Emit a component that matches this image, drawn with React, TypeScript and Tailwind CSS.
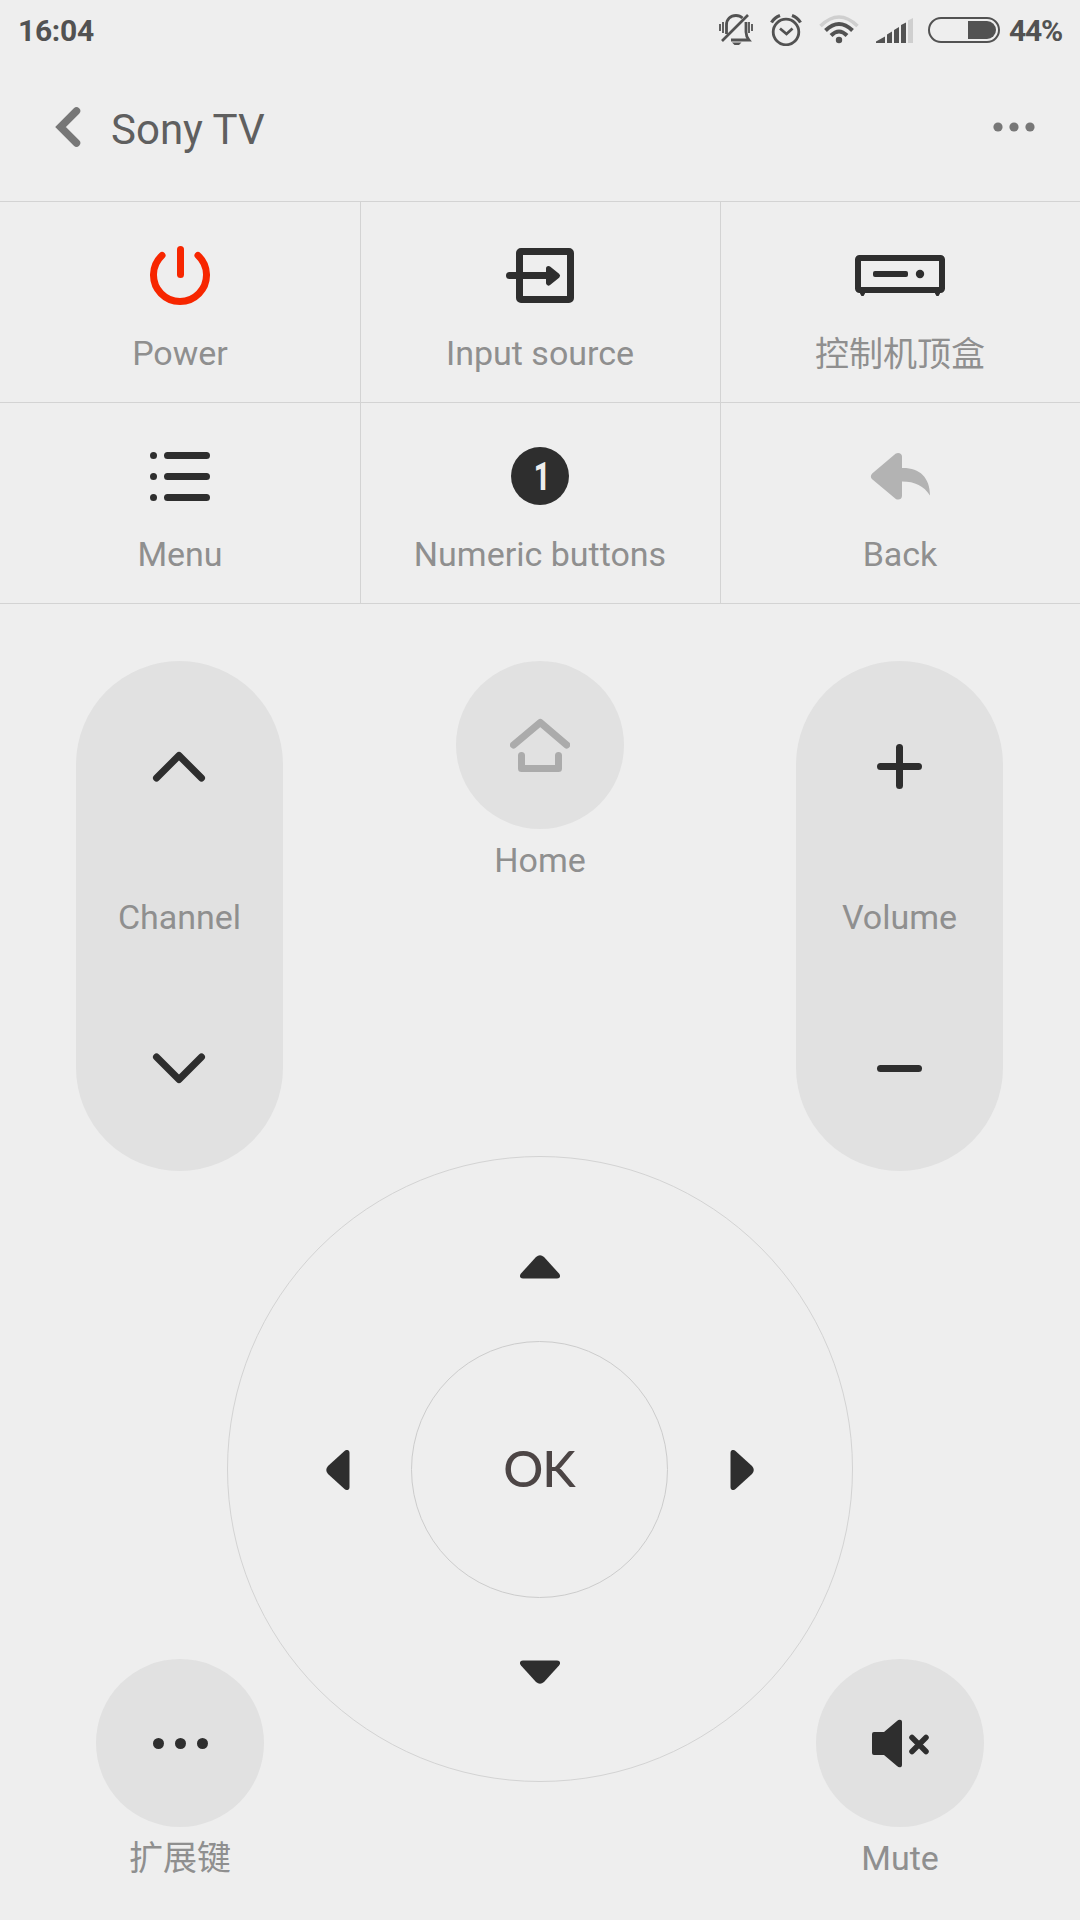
import type { ReactNode } from 'react'

function StatusBar() {
  return (
    <div className="flex h-[60px] items-center pl-[18px] pr-[18px] text-[30px] font-bold text-[#525252]">
      <span className="flex-1 tracking-[-0.3px]">16:04</span>

      {/* Silent */}
      <svg width="34" height="32" viewBox="0 0 34 32" fill="none" stroke="#525252" className="mr-[17px]">
        <path d="M1 10v7M4 8v11M30 8v11M33 10v7" strokeWidth="1.8" />
        <path d="M7.5 20V11C7.5 5 11.500 1.500 17 1.500C20 1.500 22 2.500 23.500 4" strokeWidth="2.8" />
        <path d="M27 8V18C27 21.500 28 23.500 30 26H12" strokeWidth="2.8" />
        <path d="M3 27L29 1" strokeWidth="2.6" />
        <path d="M13 28.500h9.500l-2.500 2.500h-4.500z" fill="#525252" stroke="none" />
      </svg>

      {/* Alarm */}
      <svg width="32" height="32" viewBox="0 0 32 32" fill="none" stroke="#525252" className="mr-[17px]">
        <circle cx="16" cy="18" r="12.800" strokeWidth="2.800" />
        <path d="M10 14.500L16.500 20L22.500 14.500" strokeWidth="2.800" />
        <path d="M1.500 8.500Q4.500 3.500 10 1.500M22 1.500Q27.500 3.500 30.500 8.500" strokeWidth="3.200" />
      </svg>

      {/* Wifi */}
      <svg width="40" height="30" viewBox="0 0 40 30" fill="none" className="mr-[17px]">
        <path d="M1.500 11Q20 -7 38.500 11" stroke="#cfcfcf" strokeWidth="3.500" />
        <path d="M6.500 15.500Q20 2.500 33.500 15.500" stroke="#525252" strokeWidth="4" />
        <path d="M12 20.500Q20 12.500 28 20.500" stroke="#525252" strokeWidth="4" />
        <circle cx="20" cy="25" r="3.200" fill="#525252" />
      </svg>

      {/* Signal */}
      <svg width="37" height="26" viewBox="0 0 37 26" fill="#525252" className="mr-[15px]">
        <path d="M0 26v-1.500L9 19.500V26zM11 26V17.500L16 14.500V26zM18 26V13L23 10V26zM25 26V8L30 5.500V26z" />
        <path d="M32 26V3.500L37 1V26z" fill="#cfcfcf" />
      </svg>

      {/* Battery */}
      <svg width="72" height="26" viewBox="0 0 72 26" fill="none" className="mr-[9px]">
        <rect x="1" y="1" width="70" height="24" rx="12" stroke="#525252" strokeWidth="2" />
        <path d="M40 4h19a9 9 0 0 1 0 18H40z" fill="#525252" />
      </svg>

      <span className="w-[53px] tracking-[-1.2px]">44%</span>
    </div>
  )
}

function Header() {
  return (
    <header className="flex h-[141px] items-center pb-[8px] pl-[55px] pr-[45px]">
      <svg width="26" height="40" viewBox="0 0 26 40" fill="none">
        <path d="M21.500 4L5.500 20L21.500 36" stroke="#777777" strokeWidth="7.500" strokeLinecap="round" />
      </svg>
      <h1 className="ml-[30px] mt-[6px] flex-1 text-[42px] text-[#5f5f5f]">Sony TV</h1>
      <svg width="42" height="10" viewBox="0 0 42 10" fill="#777777" className="mt-px">
        <circle cx="5" cy="5" r="4.600" />
        <circle cx="21" cy="5" r="4.600" />
        <circle cx="37" cy="5" r="4.600" />
      </svg>
    </header>
  )
}

function PowerIcon() {
  return (
    <svg width="60" height="60" viewBox="0 0 60 60" fill="none" stroke="#f72600" strokeWidth="7" strokeLinecap="round">
      <path d="M12 10.500A26.500 26.500 0 1 0 48 10.500" />
      <path d="M30.500 4.500V29.500" />
    </svg>
  )
}

function InputIcon() {
  return (
    <svg width="68" height="60" viewBox="0 0 68 60" fill="none" stroke="#2e2e2e" strokeWidth="7">
      <rect x="13.500" y="6.500" width="51" height="48" rx="1.500" />
      <path d="M3.500 30.500H42" strokeLinecap="round" />
      <path d="M42.500 23.500L51.500 30.700L42.500 38z" fill="#2e2e2e" strokeWidth="5" strokeLinejoin="round" />
    </svg>
  )
}

function SetTopBoxIcon() {
  return (
    <svg width="90" height="60" viewBox="0 0 90 60" fill="#2e2e2e">
      <rect x="3" y="13" width="84" height="32" rx="1.500" fill="none" stroke="#2e2e2e" strokeWidth="6" />
      <rect x="18" y="26" width="35" height="6" rx="2" />
      <circle cx="65" cy="29" r="4.200" />
      <path d="M5 47h5v1.500l-1.500 2.500h-2L5 48.500zM80 47h5v1.500l-1.500 2.500h-2L80 48.500z" />
    </svg>
  )
}

function MenuIcon() {
  return (
    <svg width="60" height="60" viewBox="0 0 60 60" fill="none" stroke="#2e2e2e" strokeWidth="7" strokeLinecap="round">
      <path d="M3.500 9.500h.01M3.500 30.500h.01M3.500 51.500h.01" />
      <path d="M17.500 9.500h39M17.500 30.500h39M17.500 51.500h39" />
    </svg>
  )
}

function NumberIcon() {
  return (
    <span className="flex size-[58px] items-center justify-center rounded-full bg-[#2e2e2e] pl-[3px] pt-[2px] text-[38px] font-extrabold text-[#eeeeee]">
      <span className="scale-x-75">1</span>
    </span>
  )
}

function BackIcon() {
  return (
    <svg width="60" height="60" viewBox="0 0 60 60" fill="#b3b3b3">
      <path d="M2.200 27.500L25.500 7.800C28 6 32 7 32 10.500V22C49 21.500 60 31 60 49.500C54 40 45 35.500 32 35.500V50C32 53.500 28 54.500 25.500 52.700L2.200 33.300Q-0.500 30.500 2.200 27.500z" />
    </svg>
  )
}

const keys = [
  { label: 'Power', icon: <PowerIcon /> },
  { label: 'Input source', icon: <InputIcon /> },
  { label: '控制机顶盒', icon: <SetTopBoxIcon /> },
  { label: 'Menu', icon: <MenuIcon /> },
  { label: 'Numeric buttons', icon: <NumberIcon /> },
  { label: 'Back', icon: <BackIcon /> },
]

function KeyGrid() {
  return (
    <div className="grid grid-cols-3 border-b border-[#d3d3d3]">
      {keys.map((key, i) => (
        <button
          key={key.label}
          className={`flex h-[201px] flex-col items-center border-t border-[#d3d3d3] pt-[43px] ${
            i % 3 ? 'shadow-[inset_1px_0_0_#d3d3d3]' : ''
          }`}
        >
          <span className="flex h-[60px] items-center">{key.icon}</span>
          <span className={i === 2 ? 'mt-[29px] leading-[40px]' : 'mt-[28px] leading-[40px]'}>{key.label}</span>
        </button>
      ))}
    </div>
  )
}

function RoundKey({ label, children }: { label: string; children: ReactNode }) {
  return (
    <button className="flex flex-col items-center">
      <span className="flex size-[168px] items-center justify-center rounded-full bg-[#e1e1e1]">{children}</span>
      <span className="mt-[11px] leading-[40px]">{label}</span>
    </button>
  )
}

function Rocker({ label, up, down }: { label: string; up: string; down: string }) {
  return (
    <div className="mr-px flex h-[510px] w-[207px] flex-col items-center justify-between rounded-full bg-[#e1e1e1] pb-[73px] pt-[75px]">
      <svg width="61" height="60" viewBox="0 0 61 60" fill="none" stroke="#2e2e2e" strokeWidth="7" strokeLinecap="round" strokeLinejoin="round">
        <path d={up} />
      </svg>
      <span className="leading-[40px]">{label}</span>
      <svg width="61" height="60" viewBox="0 0 61 60" fill="none" stroke="#2e2e2e" strokeWidth="7" strokeLinecap="round" strokeLinejoin="round">
        <path d={down} />
      </svg>
    </div>
  )
}

function Arrow({ className = '' }: { className?: string }) {
  return (
    <svg width="40" height="24" viewBox="0 0 40 24" fill="#2e2e2e" className={className}>
      <path d="M16 2Q20 -1.500 24 2L39 18.500C41 21 40 23.500 37 23.500H3C0 23.500 -1 21 1 18.500z" />
    </svg>
  )
}

function DPad() {
  return (
    <div className="mr-px flex size-[626px] shrink-0 flex-col items-center justify-between rounded-full border border-[#d3d3d3] pb-[97px] pt-[98px]">
      <Arrow />
      <div className="flex w-full items-center justify-between px-[90px]">
        <Arrow className="-rotate-90" />
        <button className="mr-px flex size-[257px] items-center justify-center rounded-full border border-[#cccccc] pb-[2px] font-[Lato,sans-serif] text-[50px] font-medium tracking-[-1px] text-[#4c4545]">
          OK
        </button>
        <Arrow className="rotate-90" />
      </div>
      <Arrow className="rotate-180" />
    </div>
  )
}

export default function App() {
  return (
    <div className="flex h-[1920px] w-[1080px] flex-col overflow-hidden bg-[#eeeeee] font-[Roboto,'Noto_Sans_CJK_SC',sans-serif] text-[34px] text-[#8f8f8f]">
      <StatusBar />
      <Header />
      <KeyGrid />

      <main className="grid flex-1 grid-cols-3 pb-[42px] pt-[57px]">
        <div className="flex flex-col items-center justify-between">
          <Rocker label="Channel" up="M7.500 42L30 19.500L52.500 42" down="M7.500 19L30 41.500L52.500 19" />
          <RoundKey label="扩展键">
            <svg width="56" height="12" viewBox="0 0 56 12" fill="#2e2e2e">
              <circle cx="6.500" cy="6.500" r="5.500" />
              <circle cx="28.500" cy="6.500" r="5.500" />
              <circle cx="50.500" cy="6.500" r="5.500" />
            </svg>
          </RoundKey>
        </div>

        <div className="flex flex-col items-center">
          <RoundKey label="Home">
            <svg width="60" height="60" viewBox="0 0 60 60" fill="none" stroke="#ababab" strokeWidth="7" strokeLinecap="round" strokeLinejoin="round">
              <path d="M3.500 30L30.300 7.500L56.700 30" />
              <path d="M11.500 40.500V53.500H48.500V40.500" />
            </svg>
          </RoundKey>
          <div className="mt-[276px] flex w-full justify-center">
            <DPad />
          </div>
        </div>

        <div className="flex flex-col items-center justify-between">
          <Rocker label="Volume" up="M30.500 11.500V49.500M11.500 30.500H49.500" down="M11.500 30.500H49.500" />
          <RoundKey label="Mute">
            <svg width="60" height="60" viewBox="0 0 60 60" fill="#2e2e2e">
              <path d="M4 19H14L27 8Q29 6 31 7Q32 7.500 32 9V52Q32 53.500 31 54Q29 55 27 53L14 42H4Q2 42 2 40V21Q2 19 4 19z" />
              <path d="M42 24.500L56 38.500M56 24.500L42 38.500" stroke="#2e2e2e" strokeWidth="5.500" strokeLinecap="round" />
            </svg>
          </RoundKey>
        </div>
      </main>
    </div>
  )
}
